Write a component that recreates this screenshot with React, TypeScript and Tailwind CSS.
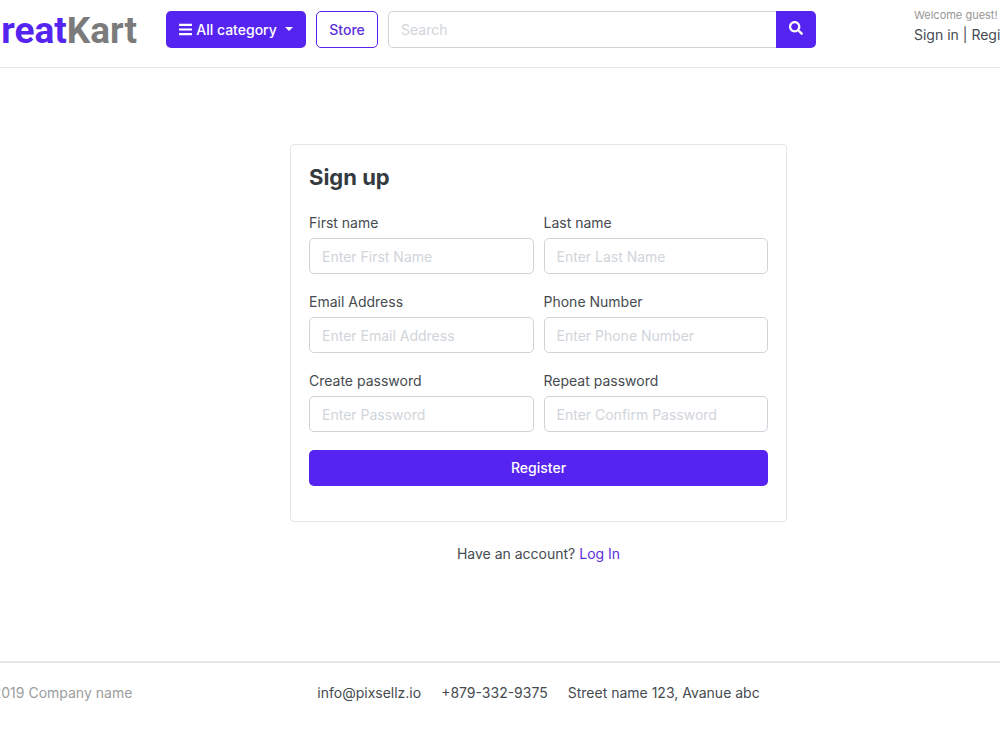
import type { FormEvent } from "react";
import { FaBars, FaSearch } from "react-icons/fa";

interface FieldProps {
  id: string;
  label: string;
  placeholder: string;
  type?: string;
}

const Field = ({ id, label, placeholder, type = "text" }: FieldProps) => (
  <div>
    <label htmlFor={id} className="mb-[3px] block leading-6">
      {label}
    </label>
    <input
      id={id}
      name={id}
      type={type}
      placeholder={placeholder}
      className="h-9 w-full rounded-[5px] border border-[#ced4da] bg-white px-3 placeholder:text-[#d0d5db] focus:border-[#5624f0] focus:outline-none"
    />
  </div>
);

const Header = () => (
  <header className="border-b border-[#e4e5e7]">
    <div className="-mr-[101px] -ml-6 flex h-[67px] items-start pt-[11px]">
      <a
        href="/"
        className="w-[190px] shrink-0 font-['Roboto',sans-serif] text-[37px] leading-10 font-bold text-[#7b7b7b]"
      >
        <span className="text-[#5624f0]">Great</span>Kart
      </a>

      <div className="flex gap-[10px]">
        <button
          type="button"
          className="flex h-[37px] w-[140px] items-center justify-center rounded-[5px] bg-[#5624f0] font-medium text-white"
        >
          <FaBars className="mr-1 h-[15px] w-[13px]" />
          All category
          <span className="mb-0.5 ml-2 border-x-4 border-t-4 border-x-transparent border-t-white" />
        </button>
        <a
          href="/store"
          className="flex h-[37px] w-[62px] items-center justify-center rounded-[5px] border border-[#5624f0] font-medium text-[#5c30dc]"
        >
          Store
        </a>
      </div>

      <form
        className="ml-[10px] flex h-[37px] flex-1"
        onSubmit={(e: FormEvent) => e.preventDefault()}
      >
        <input
          type="search"
          aria-label="Search"
          placeholder="Search"
          className="min-w-0 flex-1 rounded-l-[5px] border border-r-0 border-[#ced4da] px-3 placeholder:text-[#d0d5db] focus:outline-none"
        />
        <button
          type="submit"
          aria-label="Submit search"
          className="flex w-10 items-center justify-center rounded-r-[5px] bg-[#5624f0] pb-1 text-white"
        >
          <FaSearch />
        </button>
      </form>

      <div className="-mt-1 ml-[98px] w-[187px] shrink-0 whitespace-nowrap">
        <small className="block text-[11px] leading-4 text-[#969696]">
          Welcome guest!
        </small>
        <div className="leading-6">
          <a href="/login">Sign in</a> | <a href="/register">Register</a>
        </div>
      </div>
    </div>
  </header>
);

const SignUp = () => (
  <section className="-mr-[101px] -ml-6 pt-[76px] pb-[95px]">
    <div className="mx-auto w-[497px] rounded border border-[#e4e5e7] px-[18px] pt-[18px] pb-[35px]">
      <h1 className="mb-5 text-[22px] leading-7 font-bold text-[#343a40]">
        Sign up
      </h1>
      <form onSubmit={(e: FormEvent) => e.preventDefault()}>
        <div className="mb-[18px] grid grid-cols-2 gap-x-[10px] gap-y-4">
          <Field
            id="first_name"
            label="First name"
            placeholder="Enter First Name"
          />
          <Field
            id="last_name"
            label="Last name"
            placeholder="Enter Last Name"
          />
          <Field
            id="email"
            label="Email Address"
            placeholder="Enter Email Address"
            type="email"
          />
          <Field
            id="phone"
            label="Phone Number"
            placeholder="Enter Phone Number"
            type="tel"
          />
          <Field
            id="password"
            label="Create password"
            placeholder="Enter Password"
            type="password"
          />
          <Field
            id="confirm_password"
            label="Repeat password"
            placeholder="Enter Confirm Password"
            type="password"
          />
        </div>
        <button
          type="submit"
          className="h-9 w-full rounded-[5px] bg-[#5624f0] font-medium text-white"
        >
          Register
        </button>
      </form>
    </div>
    <p className="mt-5 text-center leading-6">
      Have an account?{" "}
      <a href="/login" className="text-[#5c30dc]">
        Log In
      </a>
    </p>
  </section>
);

const Footer = () => (
  <footer className="border-t-2 border-[#e4e5e7]">
    <div className="-mr-[101px] -ml-6 grid grid-cols-[1fr_auto_1fr] py-[18px] leading-6">
      <p className="text-[#9a9da0]">© 2019 Company name</p>
      <p className="flex gap-5">
        <span>info@pixsellz.io</span>
        <span>+879-332-9375</span>
        <span>Street name 123, Avanue abc</span>
      </p>
    </div>
  </footer>
);

export default function App() {
  return (
    <div className="min-h-screen overflow-hidden bg-white font-['Inter',sans-serif] text-sm text-[#464b50]">
      <Header />
      <main>
        <SignUp />
      </main>
      <Footer />
    </div>
  );
}
